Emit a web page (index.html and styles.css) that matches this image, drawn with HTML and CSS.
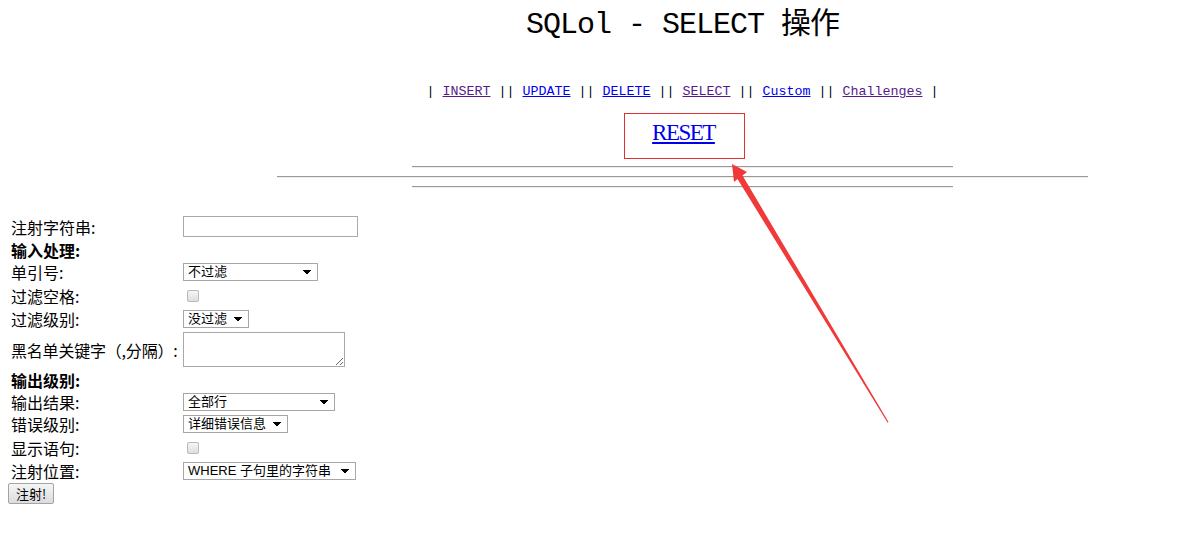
FILE: index.html
```html
<!DOCTYPE html>
<html lang="zh-CN">
<head>
<meta charset="utf-8">
<title>SQLol - SELECT 操作</title>
<link rel="stylesheet" href="styles.css">
</head>
<body>
<div class="column">
  <h1 class="title">SQLol - SELECT 操作</h1>
  <p class="nav"><span class="bar">|</span> <a class="visited" href="#">INSERT</a> <span class="bar">||</span> <a href="#">UPDATE</a> <span class="bar">||</span> <a href="#">DELETE</a> <span class="bar">||</span> <a class="visited" href="#">SELECT</a> <span class="bar">||</span> <a href="#">Custom</a> <span class="bar">||</span> <a class="visited" href="#">Challenges</a> <span class="bar">|</span></p>
  <div class="reset-wrap"><div class="reset-box"><a href="#">RESET</a></div></div>
  <hr class="rule short first">
  <hr class="rule long">
  <hr class="rule short">
</div>
<form class="inject-form">
  <table class="opts">
    <tr><td class="lbl">注射字符串:</td><td><input type="text" class="txt"></td></tr>
    <tr><td class="lbl head" colspan="2">输入处理:</td></tr>
    <tr><td class="lbl">单引号:</td><td><select class="sel w-quote"><option>不过滤</option></select></td></tr>
    <tr><td class="lbl">过滤空格:</td><td><input type="checkbox" class="chk"></td></tr>
    <tr><td class="lbl">过滤级别:</td><td><select class="sel w-level"><option>没过滤</option></select></td></tr>
    <tr><td class="lbl tight">黑名单关键字（,分隔）:</td><td><textarea class="area"></textarea></td></tr>
    <tr><td class="lbl head" colspan="2">输出级别:</td></tr>
    <tr><td class="lbl">输出结果:</td><td><select class="sel w-out"><option>全部行</option></select></td></tr>
    <tr><td class="lbl">错误级别:</td><td><select class="sel w-err"><option>详细错误信息</option></select></td></tr>
    <tr><td class="lbl">显示语句:</td><td><input type="checkbox" class="chk"></td></tr>
    <tr><td class="lbl">注射位置:</td><td><select class="sel w-pos"><option>WHERE 子句里的字符串</option></select></td></tr>
  </table>
  <button type="button" class="submit">注射!</button>
</form>
<svg class="arrow" width="1199" height="540" viewBox="0 0 1199 540" aria-hidden="true">
  <polygon points="732,164 747,172 742.5,175.5 888.5,422 887.5,422.5 737.5,179 734,182" fill="#f03a3a"/>
</svg>
</body>
</html>
```

FILE: styles.css
```css
html {
  background: #fff;
}
body {
  margin: 8px;
  font-family: "Noto Sans CJK SC", "Liberation Sans", sans-serif;
  color: #000;
}
.column {
  width: 811px;
  margin-left: 269px;
}
.title {
  margin: -3px -100px 0;
  text-align: center;
  font-family: "Liberation Mono", "Noto Sans CJK SC", monospace;
  font-weight: normal;
  font-size: 30px;
  letter-spacing: -1px;
  line-height: 40px;
  color: #000;
}
.nav {
  margin: 37px 0 0;
  text-align: center;
  font-family: "Liberation Mono", monospace;
  font-size: 13.33px;
  line-height: 20px;
  white-space: pre;
  color: #000;
}
.bar {
  color: #000;
}
.nav a {
  color: #0000ee;
}
.nav a.visited {
  color: #551a8b;
}
.reset-wrap {
  display: flex;
  justify-content: center;
  margin-top: 11px;
  padding-left: 3px;
}
.reset-box {
  box-sizing: border-box;
  width: 121px;
  height: 46px;
  padding-bottom: 6px;
  border: 1px solid #e03030;
  display: flex;
  align-items: center;
  justify-content: center;
}
.reset-box a {
  font-family: "Liberation Serif", serif;
  font-size: 23px;
  letter-spacing: -1.5px;
  color: #0000ee;
  padding-right: 1px;
}
.rule {
  height: 0;
  margin: 8px auto;
  border: 0;
  border-top: 1px solid #999;
  border-bottom: 1px solid #eee;
}
.rule.first {
  margin-top: 7px;
}
.rule.short {
  width: 541px;
}
.rule.long {
  width: 811px;
}
.inject-form {
  margin-top: 25px;
}
.opts {
  border-spacing: 2px;
}
.opts td {
  padding: 1px;
  vertical-align: middle;
}
.lbl {
  font-size: 16px;
  line-height: 18px;
  white-space: nowrap;
  width: 168px;
}
.lbl.tight {
  letter-spacing: -0.2px;
}
.head {
  font-weight: bold;
}
.txt {
  box-sizing: border-box;
  display: block;
  width: 175px;
  height: 21px;
  margin: 0;
  border: 1px solid #a9a9a9;
  padding: 1px 2px;
}
.sel {
  box-sizing: border-box;
  display: block;
  -webkit-appearance: none;
  appearance: none;
  height: 18px;
  margin: 0;
  padding: 0 18px 0 4px;
  border: 1px solid #a6a6a6;
  border-radius: 0;
  background-color: #fff;
  background-image: linear-gradient(45deg, transparent 50%, #000 50%), linear-gradient(135deg, #000 50%, transparent 50%);
  background-size: 4px 5px, 4px 5px;
  background-position: right 10px center, right 6px center;
  background-repeat: no-repeat;
  font-family: "Liberation Sans", "Noto Sans CJK SC", sans-serif;
  font-size: 13px;
  line-height: 16px;
  color: #000;
}
.w-quote { width: 135px; }
.w-level { width: 66px; }
.w-out { width: 152px; }
.w-err { width: 105px; }
.w-pos { width: 173px; }
.chk {
  -webkit-appearance: none;
  appearance: none;
  display: block;
  box-sizing: border-box;
  width: 12px;
  height: 12px;
  margin: 5px 3px 4px 4px;
  border: 1px solid #b8b8b8;
  border-radius: 2px;
  background: linear-gradient(#f6f6f6, #dedede);
}
.area {
  box-sizing: border-box;
  display: block;
  width: 162px;
  height: 35px;
  margin: 0;
  border: 1px solid #a9a9a9;
  padding: 2px;
  resize: both;
}
.submit {
  box-sizing: border-box;
  display: block;
  width: 46px;
  height: 21px;
  margin: 0;
  padding: 0;
  border: 1px solid #a3a3a3;
  border-radius: 2px;
  background: linear-gradient(#f5f5f5, #dcdcdc);
  font-family: "Noto Sans CJK SC", sans-serif;
  font-size: 13px;
  line-height: 19px;
  color: #000;
}
.arrow {
  position: absolute;
  left: 0;
  top: 0;
  pointer-events: none;
}
```
